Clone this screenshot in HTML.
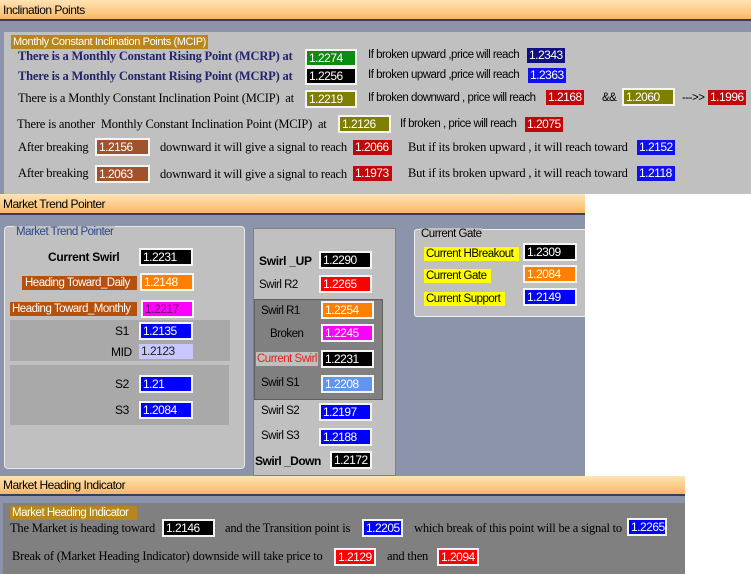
<!DOCTYPE html><html><head><style>
*{margin:0;padding:0;box-sizing:border-box}
body{width:751px;height:574px;position:relative;background:#fff;overflow:hidden;font-family:"Liberation Sans",sans-serif;font-size:11px;letter-spacing:-.4px;color:#000}
div,span{position:absolute;white-space:nowrap}
.hd{height:21px;background:linear-gradient(#ffe3b4,#fbc67e 70%,#f6b565);border-bottom:2px solid #3c3c5c;font-size:12px;padding:3px 0 0 3px;letter-spacing:-.5px}
.bg{background:#8c94ac}
.s{font-family:"Liberation Serif",serif;font-size:12.5px;letter-spacing:-.2px}
.b{font-weight:bold;color:#23236e}
.v{height:18px;border:2px solid #f4f4f4;color:#fff;font-size:12px;line-height:14px;padding-left:2px;letter-spacing:-.5px}
.n{border:none;height:15px;line-height:15px}
.t{font-size:11.5px;letter-spacing:-.5px}
.l{font-size:11px;letter-spacing:-.4px}
</style></head><body>
<div class="hd" style="left:0;top:0;width:751px">Inclination Points</div>
<div class="bg" style="left:0;top:21px;width:751px;height:173px"></div>
<div style="left:4px;top:32px;width:747px;height:162px;background:#c0c0c0"></div>
<div class="l" style="left:11px;top:35px;width:197px;height:14px;background:#b8861b;color:#fff;padding-left:2px;line-height:14px">Monthly Constant Inclination Points (MCIP)</div>
<div class="s b" style="left:18px;top:49px">There is a Monthly Constant Rising Point (MCRP) at</div>
<div class="v" style="left:305px;top:49px;width:52px;background:#118a11">1.2274</div>
<div class="t" style="left:368px;top:49px">If broken upward ,price will reach</div>
<div class="v n" style="left:527px;top:48px;width:38px;background:#0f0f80">1.2343</div>
<div class="s b" style="left:18px;top:69px">There is a Monthly Constant Rising Point (MCRP) at</div>
<div class="v" style="left:305px;top:67px;width:52px;background:#000">1.2256</div>
<div class="t" style="left:368px;top:69px">If broken upward ,price will reach</div>
<div class="v n" style="left:528px;top:68px;width:38px;background:#1010ee">1.2363</div>
<div class="s" style="left:18px;top:91px">There is a Monthly Constant Inclination Point (MCIP)&nbsp; at</div>
<div class="v" style="left:305px;top:90px;width:52px;background:#7e7e00">1.2219</div>
<div class="t" style="left:368px;top:92px">If broken downward , price will reach</div>
<div class="v n" style="left:546px;top:90px;width:38px;background:#c00808">1.2168</div>
<div class="t" style="left:602px;top:92px">&amp;&amp;</div>
<div class="v" style="left:622px;top:88px;width:53px;background:#7e7e00">1.2060</div>
<div class="t" style="left:682px;top:92px">---&gt;&gt;</div>
<div class="v n" style="left:708px;top:90px;width:38px;background:#c00808">1.1996</div>
<div class="s" style="left:17px;top:117px">There is another&nbsp; Monthly Constant Inclination Point (MCIP)&nbsp; at</div>
<div class="v" style="left:338px;top:115px;width:53px;background:#7e7e00">1.2126</div>
<div class="t" style="left:400px;top:118px">If broken , price will reach</div>
<div class="v n" style="left:525px;top:117px;width:38px;background:#c00808">1.2075</div>
<div class="s" style="left:18px;top:140px">After breaking</div>
<div class="v" style="left:95px;top:138px;width:55px;background:#a0522d">1.2156</div>
<div class="s" style="left:160px;top:140px">downward it will give a signal to reach</div>
<div class="v n" style="left:353px;top:140px;width:39px;background:#c00808">1.2066</div>
<div class="s" style="left:408px;top:140px">But if its broken upward , it will reach toward</div>
<div class="v n" style="left:637px;top:140px;width:38px;background:#1010ee">1.2152</div>
<div class="s" style="left:18px;top:166px">After breaking</div>
<div class="v" style="left:95px;top:165px;width:55px;background:#a0522d">1.2063</div>
<div class="s" style="left:160px;top:167px">downward it will give a signal to reach</div>
<div class="v n" style="left:353px;top:166px;width:39px;background:#c00808">1.1973</div>
<div class="s" style="left:408px;top:166px">But if its broken upward , it will reach toward</div>
<div class="v n" style="left:637px;top:166px;width:38px;background:#1010ee">1.2118</div>

<div class="hd" style="left:0;top:194px;width:585px">Market Trend Pointer</div>
<div class="bg" style="left:0;top:215px;width:585px;height:262px"></div>
<div style="left:4px;top:226px;width:241px;height:243px;background:#c0c0c0;border:1px solid #e8e8e8;border-radius:4px"></div>
<div class="t" style="left:14px;top:226px;background:#c0c0c0;color:#2a4690;padding:0 2px">Market Trend Pointer</div>
<div style="left:48px;top:250px;font-weight:bold;font-size:12px;letter-spacing:-.3px">Current Swirl</div>
<div class="v" style="left:139px;top:248px;width:54px;background:#000">1.2231</div>
<div class="t" style="left:22px;top:276px;width:115px;height:14px;background:#b5500d;color:#fff;padding-left:3px;line-height:14px">Heading Toward_Daily</div>
<div class="v" style="left:140px;top:273px;width:54px;background:#ff8000">1.2148</div>
<div class="t" style="left:10px;top:302px;width:127px;height:14px;background:#b5500d;color:#fff;padding-left:2px;line-height:14px">Heading Toward_Monthly</div>
<div class="v" style="left:141px;top:300px;width:53px;background:#ff00ff;color:#6a006a">1.2217</div>
<div style="left:10px;top:320px;width:220px;height:41px;background:#a9a9a9"></div>
<div style="left:115px;top:324px;font-size:12px">S1</div>
<div class="v" style="left:139px;top:322px;width:54px;background:#0000ff">1.2135</div>
<div style="left:111px;top:345px;font-size:12px">MID</div>
<div class="v n" style="left:139px;top:344px;width:54px;background:#c8c8ff;color:#222">1.2123</div>
<div style="left:10px;top:365px;width:219px;height:60px;background:#a9a9a9"></div>
<div style="left:115px;top:377px;font-size:12px">S2</div>
<div class="v" style="left:139px;top:375px;width:54px;background:#0000ff">1.21</div>
<div style="left:115px;top:403px;font-size:12px">S3</div>
<div class="v" style="left:139px;top:401px;width:54px;background:#0000ff">1.2084</div>

<div style="left:253px;top:228px;width:143px;height:248px;background:#c0c0c0;border:1px solid #808080"></div>
<div style="left:259px;top:254px;font-weight:bold;font-size:12px;letter-spacing:-.3px">Swirl _UP</div>
<div class="v" style="left:319px;top:251px;width:53px;background:#000">1.2290</div>
<div class="t" style="left:259px;top:279px">Swirl R2</div>
<div class="v" style="left:319px;top:275px;width:53px;background:#ff0000">1.2265</div>
<div style="left:254px;top:299px;width:129px;height:101px;background:#808080;border:1px solid #606060"></div>
<div class="t" style="left:261px;top:305px">Swirl R1</div>
<div class="v" style="left:321px;top:301px;width:53px;background:#ff8000">1.2254</div>
<div class="t" style="left:270px;top:328px">Broken</div>
<div class="v" style="left:321px;top:324px;width:53px;background:#ff00ff">1.2245</div>
<div class="t" style="left:256px;top:352px;background:#c0c0c0;color:#e02020;padding:1px 1px">Current Swirl</div>
<div class="v" style="left:321px;top:350px;width:53px;background:#000">1.2231</div>
<div class="t" style="left:261px;top:377px">Swirl S1</div>
<div class="v" style="left:321px;top:375px;width:53px;background:#6495ed">1.2208</div>
<div class="t" style="left:261px;top:405px">Swirl S2</div>
<div class="v" style="left:319px;top:403px;width:53px;background:#0000ff">1.2197</div>
<div class="t" style="left:261px;top:430px">Swirl S3</div>
<div class="v" style="left:319px;top:428px;width:53px;background:#0000ff">1.2188</div>
<div style="left:255px;top:454px;font-weight:bold;font-size:12px;letter-spacing:-.5px">Swirl _Down</div>
<div class="v" style="left:330px;top:451px;width:42px;background:#000">1.2172</div>

<div style="left:414px;top:229px;width:175px;height:88px;background:#c0c0c0;border:1px solid #f0f0f0;border-radius:3px"></div>
<div class="t" style="left:420px;top:228px;background:#c0c0c0;padding:0 1px">Current Gate</div>
<div class="t" style="left:424px;top:247px;width:95px;height:14px;background:#ffff00;padding-left:2px;line-height:14px">Current HBreakout</div>
<div class="v" style="left:523px;top:243px;width:54px;background:#000">1.2309</div>
<div class="t" style="left:424px;top:269px;width:67px;height:14px;background:#ffff00;padding-left:2px;line-height:14px">Current Gate</div>
<div class="v" style="left:523px;top:265px;width:54px;background:#ff8000">1.2084</div>
<div class="t" style="left:424px;top:292px;width:81px;height:14px;background:#ffff00;padding-left:2px;line-height:14px">Current Support</div>
<div class="v" style="left:523px;top:288px;width:54px;background:#0000ff">1.2149</div>
<div style="left:585px;top:194px;width:166px;height:283px;background:#fff"></div>

<div class="hd" style="left:0;top:476px;width:685px;height:20px;padding-top:2px">Market Heading Indicator</div>
<div class="bg" style="left:0;top:496px;width:685px;height:78px"></div>
<div style="left:3px;top:503px;width:682px;height:71px;background:#808080"></div>
<div class="t" style="left:10px;top:506px;width:127px;height:14px;background:#b8861b;color:#fff;padding-left:2px;line-height:14px">Market Heading Indicator</div>
<div class="s" style="left:10px;top:521px">The Market is heading toward</div>
<div class="v" style="left:162px;top:519px;width:53px;background:#000">1.2146</div>
<div class="s" style="left:225px;top:521px">and the Transition point is</div>
<div class="v" style="left:362px;top:519px;width:41px;background:#0000ff">1.2205</div>
<div class="s" style="left:414px;top:521px">which break of this point will be a signal to</div>
<div class="v" style="left:627px;top:518px;width:40px;background:#0000ff">1.2265</div>
<div class="s" style="left:12px;top:549px">Break of (Market Heading Indicator) downside will take price to</div>
<div class="v" style="left:334px;top:548px;width:42px;background:#ff0000">1.2129</div>
<div class="s" style="left:387px;top:549px">and then</div>
<div class="v" style="left:437px;top:548px;width:42px;background:#ff0000">1.2094</div>
</body></html>
